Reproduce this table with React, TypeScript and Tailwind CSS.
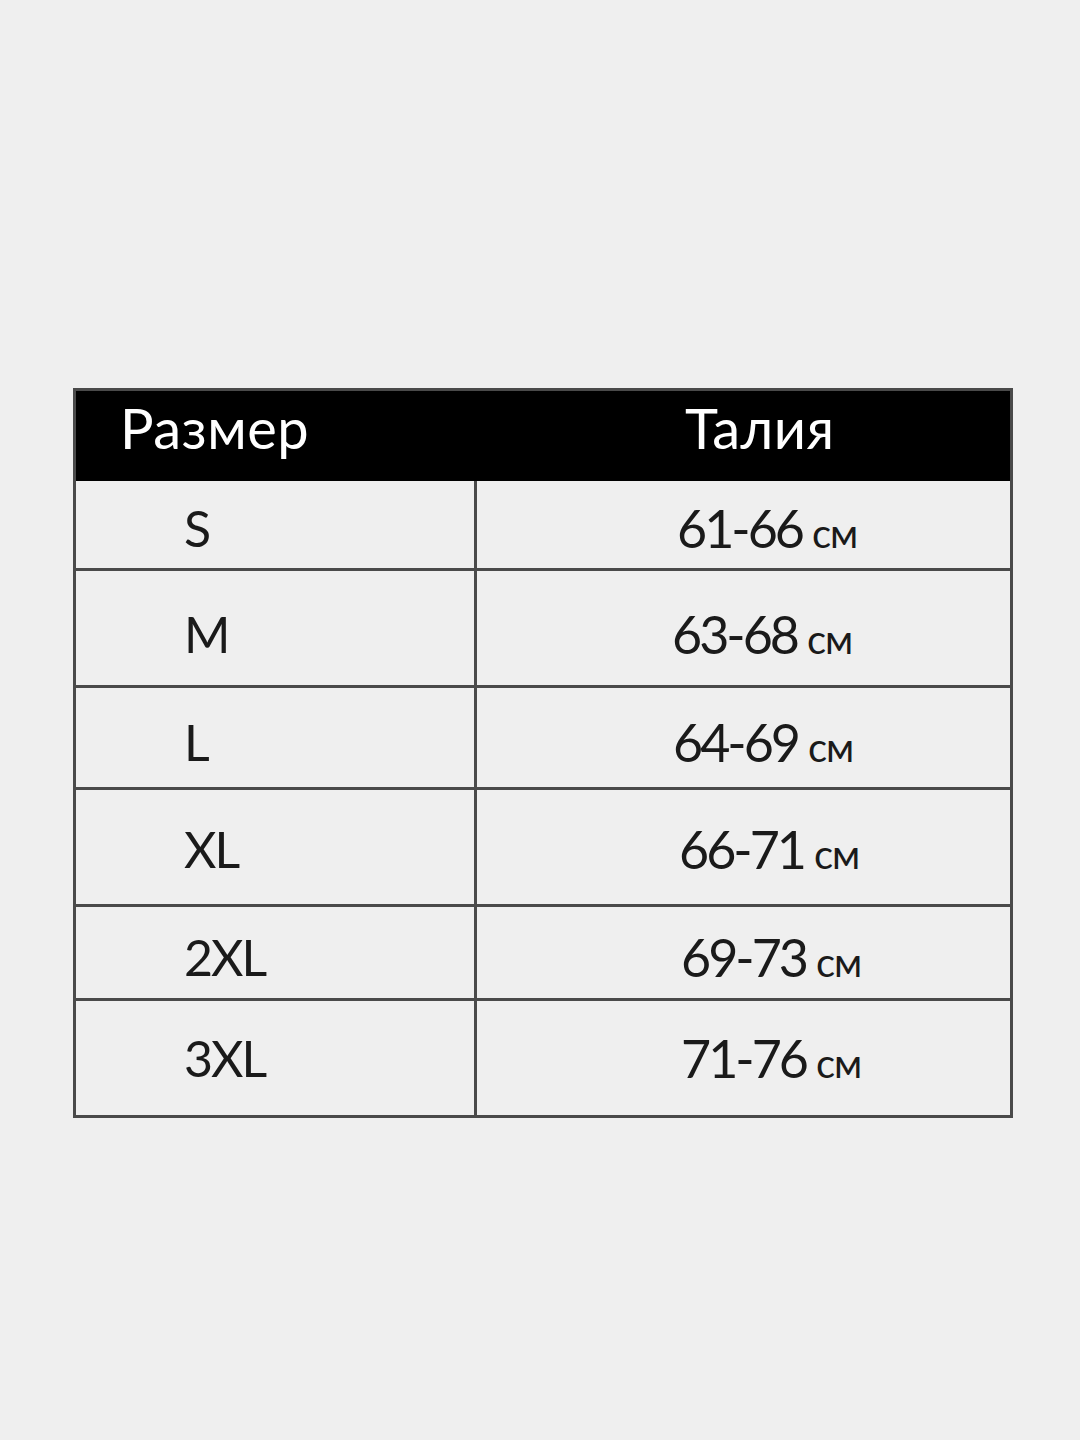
import React from "react";

const rows: { size: string; waist: string; h: number; lp: number; rp: number; pt: number }[] = [
  { size: "S", waist: "61-66", h: 87, lp: 108, rp: 200, pt: 6 },
  { size: "M", waist: "63-68", h: 117, lp: 108, rp: 195, pt: 12 },
  { size: "L", waist: "64-69", h: 102, lp: 108, rp: 196, pt: 8 },
  { size: "XL", waist: "66-71", h: 117, lp: 108, rp: 202, pt: 4 },
  { size: "2XL", waist: "69-73", h: 94, lp: 108, rp: 204, pt: 8 },
  { size: "3XL", waist: "71-76", h: 117, lp: 108, rp: 204, pt: 0 },
];

export default function App() {
  return (
    <div
      className="w-[1080px] h-[1440px] bg-[#efefef] flex flex-col items-start pt-[388px] pl-[73px]"
      style={{ fontFamily: "Lato, 'Open Sans', sans-serif" }}
    >
      <div className="w-[940px] flex flex-col border-[3px] border-[#4a4a4a]">
        <div className="h-[90px] bg-black flex items-center text-white text-[56px] leading-none tracking-[0.5px]">
          <div className="w-[398px] pl-[44px] pb-[16px]">Размер</div>
          <div className="flex-1 pl-[211px] pb-[16px]">Талия</div>
        </div>
        {rows.map((r, i) => (
          <div
            key={r.size}
            className={`flex text-[#1a1a1a] ${i > 0 ? "border-t-[3px] border-[#4a4a4a]" : ""}`}
            style={{ height: r.h }}
          >
            <div className="w-[401px] border-r-[3px] border-[#4a4a4a] flex items-center">
              <span className="text-[50px] leading-none tracking-[-2px]" style={{ paddingLeft: r.lp, paddingTop: r.pt }}>
                {r.size}
              </span>
            </div>
            <div className="flex-1 flex items-center">
              <span className="leading-none whitespace-nowrap" style={{ paddingLeft: r.rp, paddingTop: r.pt }}>
                <span className="text-[52px] tracking-[-3px]">{r.waist}</span>
                <span className="text-[40px] ml-[10px] tracking-[-1px]">см</span>
              </span>
            </div>
          </div>
        ))}
      </div>
    </div>
  );
}
